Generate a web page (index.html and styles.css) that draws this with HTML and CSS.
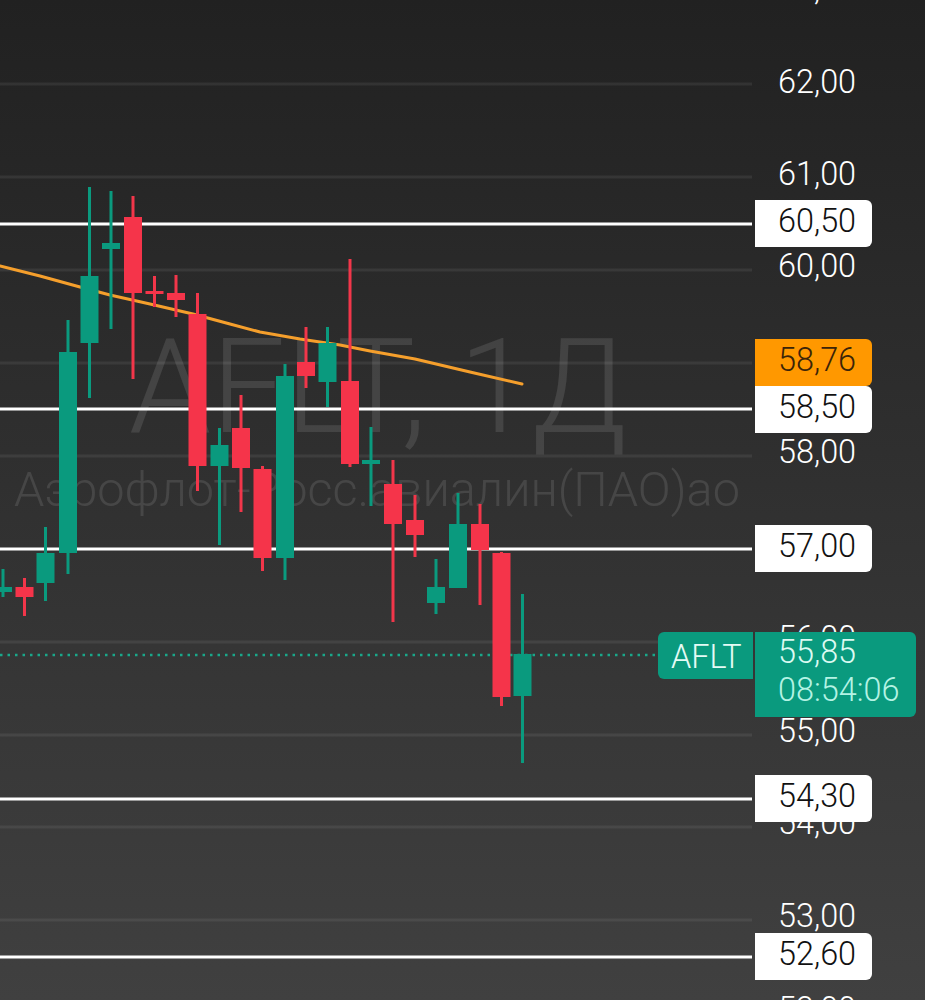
FILE: index.html
```html
<!DOCTYPE html>
<html lang="ru">
<head>
<meta charset="utf-8">
<title>AFLT, 1Д</title>
<link rel="stylesheet" href="styles.css">
</head>
<body>
<main class="chart">
  <div class="watermark">
    <div class="wm-title">AFLT, 1Д</div>
    <div class="wm-sub">Аэрофлот-Росс.авиалин(ПАО)ао</div>
  </div>
  <svg class="plot" width="925" height="1000" viewBox="0 0 925 1000" aria-hidden="true">
    <g class="grid">
      <line x1="0" x2="752" y1="84" y2="84"/><line x1="0" x2="752" y1="177" y2="177"/>
      <line x1="0" x2="752" y1="270" y2="270"/><line x1="0" x2="752" y1="363" y2="363"/>
      <line x1="0" x2="752" y1="456" y2="456"/><line x1="0" x2="752" y1="642" y2="642"/>
      <line x1="0" x2="752" y1="735" y2="735"/><line x1="0" x2="752" y1="827" y2="827"/>
      <line x1="0" x2="752" y1="920" y2="920"/>
    </g>
    <g class="levels">
      <line x1="0" x2="752" y1="224" y2="224"/><line x1="0" x2="752" y1="409" y2="409"/>
      <line x1="0" x2="752" y1="549" y2="549"/><line x1="0" x2="752" y1="799" y2="799"/>
      <line x1="0" x2="752" y1="957" y2="957"/>
    </g>
    <line class="last" x1="0" x2="658" y1="655" y2="655"/>
    <polyline class="ma" points="0,266 40,276 80,287 110,295 150,304 193,314 230,324 260,332 300,339 340,345 370,351 415,359 470,372 522,384"/>
    <g class="up">
      <line x1="3" x2="3" y1="569" y2="597"/><rect x="-6" y="587" width="18" height="5"/>
      <line x1="45.5" x2="45.5" y1="527" y2="601"/><rect x="36.5" y="553" width="18" height="30"/>
      <line x1="68" x2="68" y1="320" y2="574"/><rect x="59" y="352" width="18" height="201"/>
      <line x1="89.5" x2="89.5" y1="187" y2="398"/><rect x="80.5" y="276" width="18" height="67"/>
      <line x1="111" x2="111" y1="191" y2="329"/><rect x="102" y="243" width="18" height="6"/>
      <line x1="219.5" x2="219.5" y1="428" y2="545"/><rect x="210.5" y="445" width="18" height="21"/>
      <line x1="285" x2="285" y1="364" y2="580"/><rect x="276" y="376" width="18" height="182"/>
      <line x1="327.5" x2="327.5" y1="327" y2="407"/><rect x="318.5" y="343" width="18" height="39"/>
      <line x1="371" x2="371" y1="427" y2="506"/><rect x="362" y="460" width="18" height="4"/>
      <line x1="436" x2="436" y1="559" y2="614"/><rect x="427" y="587" width="18" height="16"/>
      <line x1="458" x2="458" y1="493" y2="588"/><rect x="449" y="524" width="18" height="64"/>
      <line x1="522.5" x2="522.5" y1="594" y2="763"/><rect x="513.5" y="654" width="18" height="42"/>
    </g>
    <g class="down">
      <line x1="24.5" x2="24.5" y1="578" y2="616"/><rect x="15.5" y="587" width="18" height="10"/>
      <line x1="133" x2="133" y1="196" y2="379"/><rect x="124" y="217" width="18" height="76"/>
      <line x1="154.5" x2="154.5" y1="276" y2="307"/><rect x="145.5" y="291" width="18" height="3"/>
      <line x1="176" x2="176" y1="275" y2="317"/><rect x="167" y="293" width="18" height="7"/>
      <line x1="197.5" x2="197.5" y1="293" y2="491"/><rect x="188.5" y="314" width="18" height="152"/>
      <line x1="241" x2="241" y1="395" y2="512"/><rect x="232" y="428" width="18" height="40"/>
      <line x1="262.5" x2="262.5" y1="466" y2="571"/><rect x="253.5" y="469" width="18" height="89"/>
      <line x1="306" x2="306" y1="327" y2="388"/><rect x="297" y="362" width="18" height="14"/>
      <line x1="350" x2="350" y1="259" y2="467"/><rect x="341" y="381" width="18" height="83"/>
      <line x1="393" x2="393" y1="460" y2="622"/><rect x="384" y="484" width="18" height="40"/>
      <line x1="415" x2="415" y1="495" y2="557"/><rect x="406" y="520" width="18" height="15"/>
      <line x1="480" x2="480" y1="504" y2="605"/><rect x="471" y="524" width="18" height="26"/>
      <line x1="501.5" x2="501.5" y1="552" y2="706"/><rect x="492.5" y="553" width="18" height="144"/>
    </g>
  </svg>

  <div class="tick t63">63,00</div>
  <div class="tick t62">62,00</div>
  <div class="tick t61">61,00</div>
  <div class="tick t60">60,00</div>
  <div class="tick t58">58,00</div>
  <div class="tick t56">56,00</div>
  <div class="tick t55">55,00</div>
  <div class="tick t54">54,00</div>
  <div class="tick t53">53,00</div>
  <div class="tick t52">52,00</div>

  <div class="tag white l6050">60,50</div>
  <div class="tag white l5850">58,50</div>
  <div class="tag orange l5876">58,76</div>
  <div class="tag white l5700">57,00</div>
  <div class="tag white l5430">54,30</div>
  <div class="tag white l5260">52,60</div>

  <div class="symbol">AFLT</div>
  <div class="price">
    <div class="price-value">55,85</div>
    <div class="price-time">08:54:06</div>
  </div>
</main>
</body>
</html>
```

FILE: styles.css
```css
html, body {
  margin: 0;
  padding: 0;
  background: #2e2e2e;
}

.chart {
  position: relative;
  width: 925px;
  height: 1000px;
  overflow: hidden;
  background: linear-gradient(180deg, #212121 0%, #404040 100%);
  font-family: Roboto, "Noto Sans", sans-serif;
  font-weight: 300;
}

.watermark {
  position: absolute;
  left: 0;
  top: 0;
  width: 752px;
  white-space: nowrap;
}

.wm-title {
  position: absolute;
  left: 129px;
  top: 307px;
  font-size: 131.5px;
  line-height: 160px;
  font-weight: 300;
  color: rgba(255, 255, 255, 0.11);
}

.wm-sub {
  position: absolute;
  left: 14px;
  top: 460px;
  font-size: 48.6px;
  line-height: 60px;
  font-weight: 300;
  color: rgba(255, 255, 255, 0.11);
}

.plot {
  position: absolute;
  left: 0;
  top: 0;
  display: block;
}

.grid line {
  stroke: #ffffff;
  stroke-opacity: 0.07;
  stroke-width: 3;
}

.levels line {
  stroke: #ffffff;
  stroke-width: 3;
}

.last {
  stroke: #1aa88a;
  stroke-width: 2.5;
  stroke-dasharray: 2.5 5;
}

.ma {
  fill: none;
  stroke: #f59f2c;
  stroke-width: 3;
  stroke-linejoin: round;
  stroke-linecap: round;
}

.up line {
  stroke: #0a9a7e;
  stroke-width: 3;
}

.up rect {
  fill: #0a9a7e;
}

.down line {
  stroke: #f2364a;
  stroke-width: 3;
}

.down rect {
  fill: #f5344a;
}

.tick {
  position: absolute;
  left: 778px;
  font-size: 32.4px;
  line-height: 40px;
  color: #ffffff;
  white-space: nowrap;
}

.t63 { top: -31px; }
.t62 { top: 62px; }
.t61 { top: 154px; }
.t60 { top: 246px; }
.t58 { top: 432px; }
.t56 { top: 618px; }
.t55 { top: 711px; }
.t54 { top: 803px; }
.t53 { top: 896px; }
.t52 { top: 989px; }

.tag {
  position: absolute;
  left: 755px;
  box-sizing: border-box;
  width: 117px;
  height: 47px;
  padding-left: 23px;
  font-size: 32.4px;
  line-height: 43px;
  border-radius: 0 6px 6px 0;
  white-space: nowrap;
}

.white {
  background: #ffffff;
  color: #111111;
}

.orange {
  background: #ff9800;
  color: #3b2408;
}

.l6050 { top: 200px; }
.l5876 { top: 339px; }
.l5850 { top: 386px; }
.l5700 { top: 525px; }
.l5430 { top: 775px; }
.l5260 { top: 933px; }

.symbol {
  position: absolute;
  left: 658px;
  top: 632px;
  box-sizing: border-box;
  width: 95px;
  height: 47px;
  padding-left: 13px;
  font-size: 32.4px;
  line-height: 50px;
  color: #e4fbf5;
  background: #0a9a7e;
  border-radius: 6px 0 0 6px;
}

.price {
  position: absolute;
  left: 755px;
  top: 632px;
  box-sizing: border-box;
  width: 161px;
  height: 85px;
  padding-left: 23px;
  font-size: 32.4px;
  background: #0a9a7e;
  border-radius: 0 6px 6px 0;
  white-space: nowrap;
}

.price-value {
  line-height: 41px;
  color: #dcfaf2;
}

.price-time {
  line-height: 34px;
  color: #b4f3e4;
}
```
